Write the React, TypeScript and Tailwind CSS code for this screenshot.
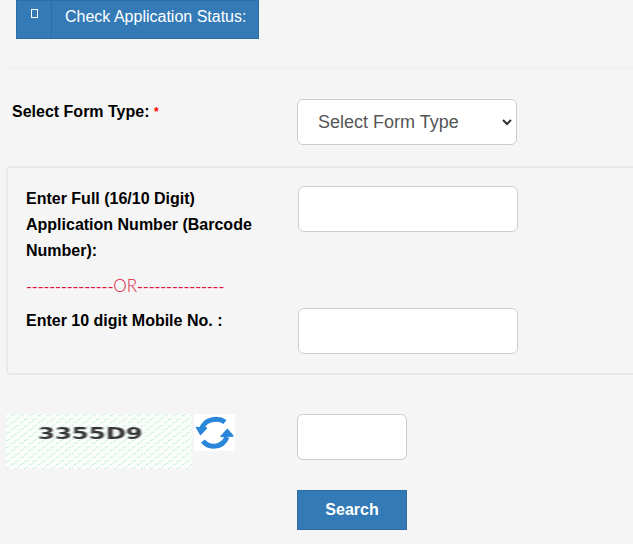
const labelClass = "font-['Liberation_Sans',Arial,sans-serif] text-[16px] font-bold leading-[26px] text-black";
const inputClass = "h-[46px] rounded-[6px] border border-[#ccc] bg-white";

const RefreshIcon = () => (
  <svg viewBox="0 0 41 37" className="h-[37px] w-[41px] bg-white">
    <path d="M8 15 C10 5 24 3 31 8" fill="none" stroke="#2a86d8" strokeWidth="5" />
    <path d="M2.5 13.5 L12.5 14 L6.5 20.5 Z" fill="#2a86d8" stroke="#2a86d8" strokeWidth="1.5" strokeLinejoin="round" />
    <path d="M9 27 C14 34 28 35 33 23" fill="none" stroke="#2a86d8" strokeWidth="5" />
    <path d="M27 22.5 L39 22 L33.3 15.5 Z" fill="#2a86d8" stroke="#2a86d8" strokeWidth="1.5" strokeLinejoin="round" />
  </svg>
);

const Captcha = () => (
  <div className="relative h-[55px] w-[186px] overflow-hidden bg-[#fbfdfb]">
    <svg className="h-full w-full">
      <defs>
        <pattern id="captcha-bg" width="9" height="7" patternUnits="userSpaceOnUse">
          <path d="M0 6 L4 4 M5 2 L9 0" stroke="#b5ead0" strokeWidth="1" strokeDasharray="2 1" />
        </pattern>
      </defs>
      <rect width="186" height="55" fill="url(#captcha-bg)" />
    </svg>
    <span className="absolute left-[32px] top-[12px] origin-left scale-x-[1.62] font-['DejaVu_Sans',sans-serif] text-[15px] font-bold leading-[16px] text-[#333] blur-[0.5px]">
      3355D9
    </span>
  </div>
);

export default function App() {
  return (
    <div className="min-h-[544px] overflow-hidden bg-[#f5f5f5] font-['Liberation_Sans',Arial,sans-serif]">
      <div className="ml-4 flex h-[39px] w-[243px] border border-[#2e6da4] bg-[#337ab7] text-white">
        <div className="flex h-full w-[35px] justify-center border-r border-[#2e6da4] pt-2">
          <span className="h-[9px] w-[7px] border border-white" />
        </div>
        <div className="pl-[13px] pt-[5px] text-[16px] leading-[22px]">Check Application Status:</div>
      </div>

      <div className="ml-2 mt-[29px] border-t border-[#eee]" />

      <div className="mt-[30px] flex">
        <div className={`${labelClass} w-[297px] pl-3`}>
          Select Form Type: <span className="align-top text-[12px] text-[#f00]">*</span>
        </div>
        <div className={`${inputClass} flex w-[220px] items-center justify-between pl-5 pr-[4px] text-[18px] text-[#555]`}>
          <span>Select Form Type</span>
          <svg viewBox="0 0 10 10" className="h-[10px] w-[10px]" fill="none" stroke="#333" strokeWidth="2">
            <path d="M1 3 L5 7 L9 3" />
          </svg>
        </div>
      </div>

      <div className="ml-[6px] mt-[21px] h-[209px] rounded-l-[4px] border-2 border-r-0 border-[#e9e9e9] pl-[18px] pt-[18px]">
        <div className="flex">
          <div className={`${labelClass} w-[272px]`}>
            Enter Full (16/10 Digit)
            <br />
            Application Number (Barcode
            <br />
            Number):
          </div>
          <div className={`${inputClass} w-[220px]`} />
        </div>
        <div className="mt-[10px] font-['Lato',sans-serif] text-[16px] leading-[24px] text-[#dc143c]">
          <span className="tracking-[-0.13px]">---------------</span>
          <span className="text-[17px] font-light">OR</span>
          <span className="tracking-[-0.13px]">---------------</span>
        </div>
        <div className="mt-[10px] flex">
          <div className={`${labelClass} w-[272px]`}>Enter 10 digit Mobile No. :</div>
          <div className={`${inputClass} w-[220px]`} />
        </div>
      </div>

      <div className="ml-[6px] mt-[39px] flex">
        <Captcha />
        <div className="ml-[2px] w-[103px]">
          <RefreshIcon />
        </div>
        <div className={`${inputClass} w-[110px]`} />
      </div>

      <div className="ml-[297px] mt-[21px] flex h-10 w-[110px] items-center justify-center border border-[#2e6da4] bg-[#337ab7] text-[16px] font-bold text-white">
        Search
      </div>
    </div>
  );
}
